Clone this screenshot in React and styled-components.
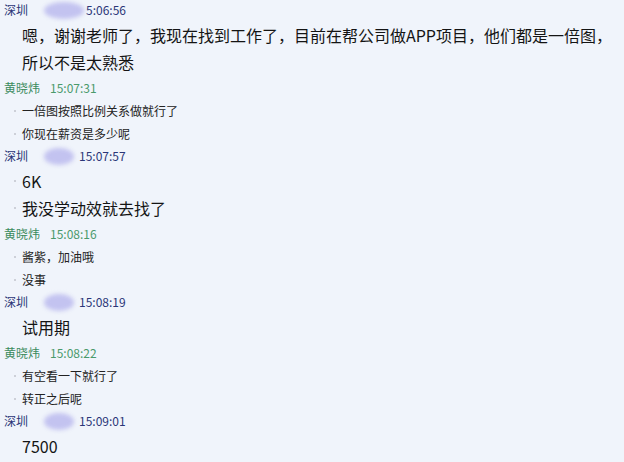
import React from "react";
import styled, { createGlobalStyle } from "styled-components";

const Global = createGlobalStyle`
  html, body { margin: 0; padding: 0; background: #f0f4fb; }
  body { font-family: "Noto Sans CJK SC", "Noto Sans", sans-serif; }
`;

const Chat = styled.div`
  width: 624px;
  height: 462px;
  overflow: hidden;
  background: #f0f4fb;
  display: flex;
  flex-direction: column;
  margin-top: -1px;
`;

const Header = styled.div`
  display: flex;
  align-items: center;
  height: 22px;
  padding-left: 4px;
  font-size: 12px;
  line-height: 22px;
  color: ${(p) => (p.$self ? "#3b8b5d" : "#2a3576")};
`;

const Name = styled.span`
  margin-right: ${(p) => (p.$self ? "10px" : "16px")};
`;

const Blur = styled.span`
  display: inline-block;
  width: ${(p) => p.$w}px;
  height: 17px;
  margin-right: ${(p) => p.$gap}px;
  border-radius: 50%;
  background: #c3c3f0;
  filter: blur(2px);
`;

const Time = styled.span`
  color: ${(p) => (p.$self ? "#4a9a6b" : "#2b3678")};
`;

const Body = styled.div`
  display: flex;
  flex-direction: column;
  padding-bottom: ${(p) => (p.$big ? "2px" : "0")};
`;

const Line = styled.div`
  display: flex;
  align-items: center;
  height: ${(p) => (p.$big ? "27px" : "23px")};
  font-size: ${(p) => (p.$big ? "16px" : "12px")};
  color: ${(p) => (p.$big ? "#141414" : "#222")};
  white-space: nowrap;
`;

const Bullet = styled.span`
  display: flex;
  justify-content: flex-start;
  width: 22px;
  padding-left: 14px;
  box-sizing: border-box;
  &::after {
    content: "";
    width: 2px;
    height: 2px;
    border-radius: 1px;
    background: ${(p) => (p.$show ? "#c2c5cc" : "transparent")};
  }
`;

const groups = [
  {
    self: false, time: "5:06:56", blur: 40, gap: 2, big: true, bullet: false,
    lines: [
      "嗯，谢谢老师了，我现在找到工作了，目前在帮公司做APP项目，他们都是一倍图，",
      "所以不是太熟悉",
    ],
  },
  { self: true, time: "15:07:31", big: false, bullet: true, lines: ["一倍图按照比例关系做就行了", "你现在薪资是多少呢"] },
  { self: false, time: "15:07:57", blur: 30, gap: 5, big: true, bullet: true, lines: ["6K", "我没学动效就去找了"] },
  { self: true, time: "15:08:16", big: false, bullet: true, lines: ["酱紫，加油哦", "没事"] },
  { self: false, time: "15:08:19", blur: 30, gap: 5, big: true, bullet: false, lines: ["试用期"] },
  { self: true, time: "15:08:22", big: false, bullet: true, lines: ["有空看一下就行了", "转正之后呢"] },
  { self: false, time: "15:09:01", blur: 30, gap: 5, big: true, bullet: false, lines: ["7500"] },
];

export default function App() {
  return (
    <>
      <Global />
      <Chat>
        {groups.map((g, i) => (
          <React.Fragment key={i}>
            <Header $self={g.self}>
              <Name $self={g.self}>{g.self ? "黄晓炜" : "深圳"}</Name>
              {!g.self && <Blur $w={g.blur} $gap={g.gap} />}
              <Time $self={g.self}>{g.time}</Time>
            </Header>
            <Body $big={g.big}>
              {g.lines.map((t, j) => (
                <Line key={j} $big={g.big}>
                  <Bullet $show={g.bullet} />
                  <span>{t}</span>
                </Line>
              ))}
            </Body>
          </React.Fragment>
        ))}
      </Chat>
    </>
  );
}
